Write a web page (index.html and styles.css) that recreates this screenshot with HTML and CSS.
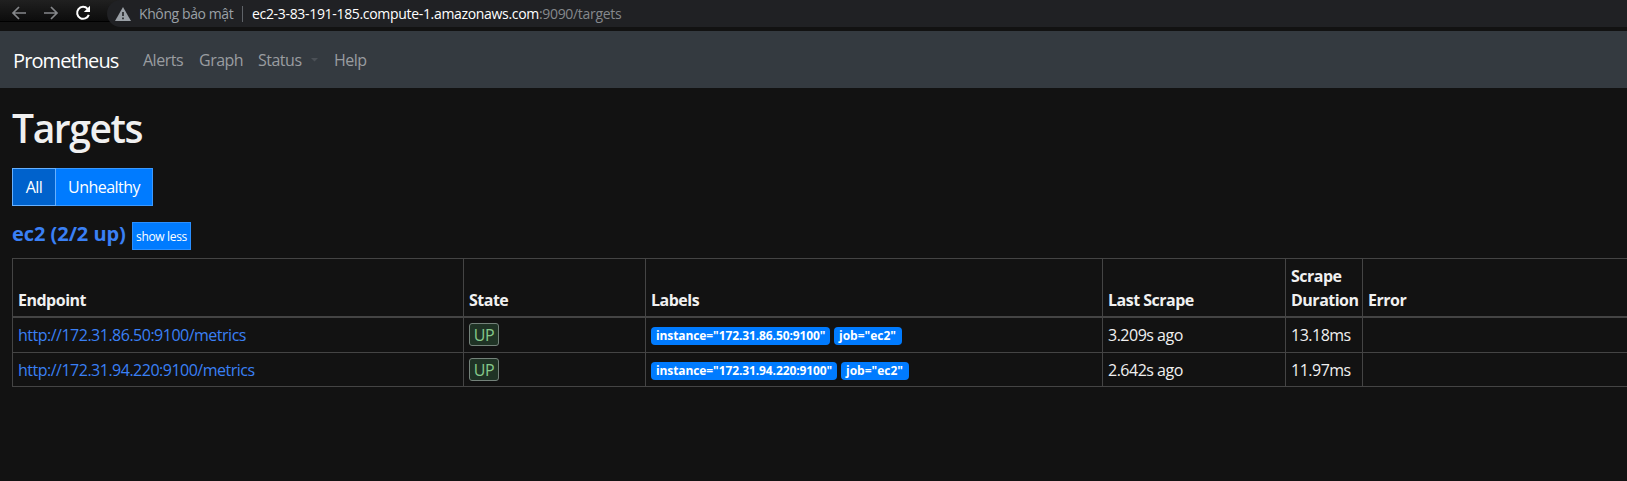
FILE: index.html
```html
<!DOCTYPE html>
<html lang="vi">
<head>
<meta charset="utf-8">
<title>Prometheus Targets</title>
<link rel="stylesheet" href="styles.css">
</head>
<body>
<header class="toolbar">
  <div class="controls">
    <svg class="ctl back" width="16" height="16" viewBox="0 0 16 16"><path d="M15 8H2M8 2L2 8l6 6"/></svg>
    <svg class="ctl forward" width="16" height="16" viewBox="0 0 16 16"><path d="M1 8h13M8 2l6 6-6 6"/></svg>
    <svg class="ctl reload" width="16" height="16" viewBox="0 0 16 16"><path d="M12.6 3.8A6 6 0 1 0 13.8 9.8"/><path class="tip" d="M15 .8V7H8.8z"/></svg>
  </div>
  <div class="omnibox">
    <svg class="warn" width="16" height="14" viewBox="0 0 16 14"><path d="M8 0l8 14H0z"/><path class="mark" d="M8 5v4M8 10.5v1.8"/></svg>
    <span class="secure">Không bảo mật</span>
    <span class="divider"></span>
    <span class="url"><span class="host">ec2-3-83-191-185.compute-1.amazonaws.com</span><span class="path">:9090/targets</span></span>
  </div>
</header>
<nav class="navbar">
  <a class="brand">Prometheus</a>
  <a class="link alerts">Alerts</a>
  <a class="link graph">Graph</a>
  <a class="link status">Status</a><svg class="caret" width="23" height="4" viewBox="0 0 23 4"><path d="M0 0h7L3.5 3.5z"/></svg>
  <a class="link help">Help</a>
</nav>
<main class="page">
  <h1 class="title">Targets</h1>
  <div class="group"><button class="btn all active">All</button><button class="btn unhealthy">Unhealthy</button></div>
  <div class="pool"><h3 class="pool-name">ec2 (2/2 up)</h3><button class="toggle">show less</button></div>
  <table class="targets">
    <colgroup><col class="c1"><col class="c2"><col class="c3"><col class="c4"><col class="c5"><col class="c6"></colgroup>
    <thead><tr><th>Endpoint</th><th>State</th><th>Labels</th><th>Last Scrape</th><th>Scrape<br>Duration</th><th>Error</th></tr></thead>
    <tbody>
      <tr class="first"><td><a class="endpoint">http://172.31.86.50:9100/metrics</a></td><td><span class="state">UP</span></td><td><div class="labels"><span class="label i1">instance="172.31.86.50:9100"</span><span class="label job">job="ec2"</span></div></td><td>3.209s ago</td><td>13.18ms</td><td></td></tr>
      <tr><td><a class="endpoint">http://172.31.94.220:9100/metrics</a></td><td><span class="state">UP</span></td><td><div class="labels"><span class="label i2">instance="172.31.94.220:9100"</span><span class="label job">job="ec2"</span></div></td><td>2.642s ago</td><td>11.97ms</td><td></td></tr>
    </tbody>
  </table>
</main>
</body>
</html>
```
FILE: styles.css
```css
* { box-sizing: border-box; }
body {
  margin: 0;
  background: #121212;
  color: #f0f0f0;
  font: 16px/24px "Open Sans", "Noto Sans", sans-serif;
  letter-spacing: -0.5px;
  width: 1627px;
  height: 481px;
  overflow: hidden;
}
.toolbar {
  display: flex;
  height: 31px;
  background: linear-gradient(#202020, #0c0c0c 21px, #000 21px, #000 22px, #121212 22px);
}
.controls { display: flex; width: 107px; padding: 5px 0 0 11px; gap: 16px; }
.ctl { fill: none; stroke: #85878a; stroke-width: 1.7; }
.reload { stroke: #fff; stroke-width: 2; }
.tip { fill: #fff; stroke: none; }
.omnibox {
  display: flex;
  align-items: center;
  flex: 1;
  height: 27px;
  padding-left: 8px;
  background: #202124;
  border-radius: 14px 0 0 14px;
  font-size: 14px;
  letter-spacing: -0.32px;
  color: #9aa0a6;
}
.warn { fill: #9aa0a6; }
.mark { stroke: #202124; stroke-width: 1.6; }
.secure { width: 103px; margin-left: 8px; white-space: nowrap; letter-spacing: -0.4px; }
.divider { width: 1px; height: 16px; background: #5f6368; }
.url { margin-left: 9px; }
.host { color: #fff; }
.path { color: #85888c; }
.navbar {
  display: flex;
  align-items: center;
  height: 57px;
  padding-left: 13px;
  background: #343a40;
}
.brand { width: 130px; padding-top: 2px; font-size: 20px; letter-spacing: -0.9px; color: #fff; }
.link { padding-top: 1px; color: #9a9da0; }
.alerts { width: 56px; }
.graph { width: 59px; }
.status { width: 53px; }
.caret { fill: #4b5056; }
.page { padding: 20px 0 0 12px; }
.title { margin: 0; height: 60px; font-size: 39px; line-height: 40px; font-weight: 600; letter-spacing: -1.4px; }
.group { display: flex; height: 38px; }
.btn {
  border: 1px solid #3b99ff;
  background: #007bff;
  color: #fff;
  font: inherit;
  letter-spacing: -0.55px;
  padding: 0;
}
.all { width: 44px; }
.unhealthy { width: 98px; margin-left: -1px; }
.active { background: #0062cc; border-color: #66b0ff; z-index: 1; }
.pool { display: flex; height: 52px; padding-top: 16px; }
.pool-name { width: 120px; margin: 0; font-size: 20px; line-height: 24px; letter-spacing: -0.05px; color: #3a80f5; white-space: nowrap; }
.toggle { width: 59px; height: 28px; padding: 2px 0 0; border: 1px solid #2a8fff; background: #007bff; color: #fff; font: 12px/18px "Open Sans", sans-serif; letter-spacing: -0.35px; }
.targets { width: 1615px; table-layout: fixed; border-collapse: collapse; }
.c1 { width: 451px; }
.c2 { width: 182px; }
.c3 { width: 457px; }
.c4 { width: 183px; }
.c5 { width: 77px; }
th, td { border: 1px solid #444; text-align: left; }
th:last-child, td:last-child { border-right: 0; }
th { height: 58px; padding: 3px 5px 4px; vertical-align: bottom; border-bottom-width: 2px; }
td { height: 34px; padding: 1px 5px 0; }
.first td { height: 36px; }
.endpoint { color: #3a80f5; }
.state { display: block; width: 30px; height: 23px; margin-top: -1px; line-height: 22px; text-align: center; border: 1px solid #74827a; border-radius: 3px; background: #1f3325; color: #86c98a; }
.labels { display: flex; gap: 4px; padding-top: 2px; }
.label { height: 18px; padding-left: 5px; line-height: 18px; font-size: 12px; font-weight: 700; color: #fff; background: #007bff; border-radius: 4px; letter-spacing: -0.1px; }
.i1 { width: 179px; }
.i2 { width: 186px; }
.job { width: 68px; letter-spacing: 0; }
```
